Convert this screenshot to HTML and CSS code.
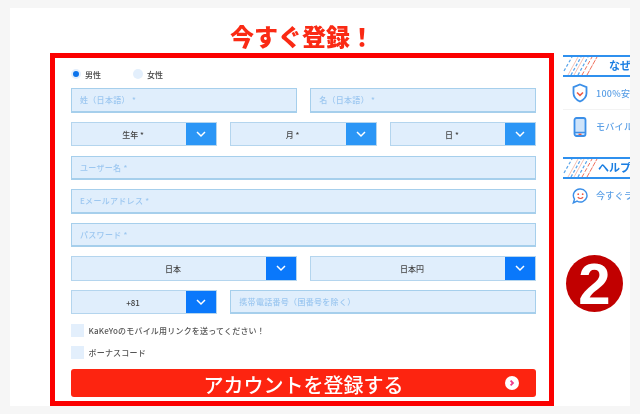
FILE: index.html
```html
<!DOCTYPE html>
<html lang="ja">
<head>
<meta charset="utf-8">
<title>今すぐ登録！</title>
<link rel="stylesheet" href="styles.css">
</head>
<body>
<div class="card">
  <main class="main">
    <h1 class="title">今すぐ登録！</h1>
    <form class="form">
      <div class="gender">
        <label class="radio-label"><span class="radio radio-on"></span>男性</label>
        <label class="radio-label"><span class="radio"></span>女性</label>
      </div>
      <div class="fields">
        <div class="row row-2">
          <div class="input">姓（日本語） *</div>
          <div class="input">名（日本語） *</div>
        </div>
        <div class="row row-3">
          <div class="select"><span class="select-text">生年 *</span><span class="chev chev-light"><svg viewBox="0 0 12 8" class="chev-svg"><path d="M2 2l4 4 4-4"/></svg></span></div>
          <div class="select"><span class="select-text">月 *</span><span class="chev chev-light"><svg viewBox="0 0 12 8" class="chev-svg"><path d="M2 2l4 4 4-4"/></svg></span></div>
          <div class="select"><span class="select-text">日 *</span><span class="chev chev-light"><svg viewBox="0 0 12 8" class="chev-svg"><path d="M2 2l4 4 4-4"/></svg></span></div>
        </div>
        <div class="input">ユーザー名 *</div>
        <div class="input">Eメールアドレス *</div>
        <div class="input">パスワード *</div>
        <div class="row row-2">
          <div class="select"><span class="select-text">日本</span><span class="chev"><svg viewBox="0 0 12 8" class="chev-svg"><path d="M2 2l4 4 4-4"/></svg></span></div>
          <div class="select"><span class="select-text">日本円</span><span class="chev"><svg viewBox="0 0 12 8" class="chev-svg"><path d="M2 2l4 4 4-4"/></svg></span></div>
        </div>
        <div class="row row-phone">
          <div class="select"><span class="select-text">+81</span><span class="chev"><svg viewBox="0 0 12 8" class="chev-svg"><path d="M2 2l4 4 4-4"/></svg></span></div>
          <div class="input">携帯電話番号（国番号を除く）</div>
        </div>
      </div>
      <div class="checks">
        <label class="check"><span class="box"></span>KaKeYoのモバイル用リンクを送ってください！</label>
        <label class="check"><span class="box"></span>ボーナスコード</label>
      </div>
      <div class="submit">
        <span class="submit-text">アカウントを登録する</span>
        <span class="submit-icon"><svg viewBox="0 0 14 14" class="submit-svg"><circle cx="7" cy="7" r="7" fill="#fff"/><path d="M5.6 4.6L8 7l-2.4 2.4" fill="none" stroke="#ee3b8a" stroke-width="1.8"/></svg></span>
      </div>
    </form>
  </main>
  <aside class="side">
    <div class="side-head">
      <svg class="stripes" viewBox="0 0 35 18" preserveAspectRatio="none"><g fill="none" stroke-width="1.2" stroke-dasharray="3 2"><path d="M1 14L9 0M8 18L18 0M15 18L25 0" stroke="#5aa5ea"/></g><g fill="none" stroke-width="1"><path d="M5 18L15 0M11 18L21 0" stroke="#f6c3b6"/><path d="M19 18L29 0" stroke="#f0705c" stroke-dasharray="4 2"/><path d="M24 18L34 0" stroke="#f0705c" stroke-dasharray="5 1"/></g></svg>
      <span class="side-title side-title-why">なぜKaKeYo</span>
    </div>
    <div class="side-row side-row-line">
      <svg class="side-icon" viewBox="0 0 16 20"><path d="M8 1.500l6.500 2.600v6.200c0 3.800-3 6.600-6.500 8.200-3.500-1.600-6.500-4.400-6.500-8.200V4.100z" fill="#fff" stroke="#3b8fe8" stroke-width="1.800"/><path d="M5 9.500l3 2.800 3-2.800" fill="none" stroke="#ee5a45" stroke-width="1.600"/></svg>
      <span class="side-text">100%安全</span>
    </div>
    <div class="side-row">
      <svg class="side-icon" viewBox="0 0 16 20"><rect x="2.500" y="1" width="11" height="18" rx="2" fill="#cfe4fa" stroke="#3b8fe8" stroke-width="1.800"/><path d="M2.500 15.500h11" stroke="#3b8fe8" stroke-width="1.500"/><path d="M6.500 17.300h3" stroke="#ee5a45" stroke-width="1.400"/></svg>
      <span class="side-text">モバイルアプリ</span>
    </div>
    <div class="side-head side-head-help">
      <svg class="stripes" viewBox="0 0 35 18" preserveAspectRatio="none"><g fill="none" stroke-width="1.2" stroke-dasharray="3 2"><path d="M1 14L9 0M8 18L18 0M15 18L25 0" stroke="#5aa5ea"/></g><g fill="none" stroke-width="1"><path d="M5 18L15 0M11 18L21 0" stroke="#f6c3b6"/><path d="M19 18L29 0" stroke="#f0705c" stroke-dasharray="4 2"/><path d="M24 18L34 0" stroke="#f0705c" stroke-dasharray="5 1"/></g></svg>
      <span class="side-title">ヘルプが必要</span>
    </div>
    <div class="side-row">
      <svg class="side-icon side-icon-chat" viewBox="0 0 18 18"><path d="M9.500 1.200a7.300 7.300 0 1 1-3.800 13.500L1.500 16.800l1.300-4.300A7.300 7.300 0 0 1 9.500 1.200z" fill="#fff" stroke="#3b8fe8" stroke-width="1.600"/><circle cx="7" cy="7" r="1" fill="#ee5a45"/><circle cx="12" cy="7" r="1" fill="#ee5a45"/><path d="M6.500 10.300c1.500 2 4.500 2 6 0" fill="none" stroke="#ee5a45" stroke-width="1.300"/></svg>
      <span class="side-text">今すぐライブチャット</span>
    </div>
    <div class="badge">2</div>
  </aside>
</div>
</body>
</html>
```
FILE: styles.css
```css
* { box-sizing: border-box; }
html, body { margin: 0; height: 414px; overflow: hidden; }
body {
  background: #f6f6f6;
  padding: 8px 10px;
  font-family: "Noto Sans CJK JP", "Noto Sans", sans-serif;
}
.card {
  width: 620px;
  height: 398px;
  background: #fff;
  display: flex;
  overflow: hidden;
  filter: blur(0.35px);
}
.main { margin-left: 40px; width: 504px; flex: none; }
.title {
  margin: 0;
  height: 45px;
  font-size: 24px;
  line-height: 55px;
  font-weight: 900;
  color: #fa2a14;
  text-align: center;
  overflow: hidden;
}
.form {
  height: 353px;
  border: 5px solid #fb0000;
  padding: 0 13px 0 16px;
}
.gender {
  display: flex;
  gap: 31px;
  height: 30.4px;
  padding-top: 10px;
  align-items: flex-start;
}
.radio-label {
  display: flex;
  align-items: center;
  gap: 4px;
  font-size: 8px;
  font-weight: 500;
  line-height: 13px;
  color: #444;
  width: 31px;
}
.radio {
  width: 10px;
  height: 10px;
  border-radius: 50%;
  background: #e3effc;
  flex: none;
  margin-top: -2px;
}
.radio-on {
  background: #0a73ec;
  border: 2px solid #e3effc;
}
.fields { display: flex; flex-direction: column; gap: 9.2px; }
.row { display: grid; gap: 13.3px; }
.row-2 { grid-template-columns: 1fr 1fr; }
.row-3 { grid-template-columns: 1fr 1fr 1fr; }
.row-phone { grid-template-columns: 146px 1fr; }
.input {
  height: 24.4px;
  background: #e0eefc;
  border: 1px solid #a6cfec;
  border-bottom-width: 2px;
  padding-left: 8px;
  font-size: 8px;
  font-weight: 500;
  line-height: 21px;
  color: #9cc7f0;
  letter-spacing: 0.3px;
}
.select {
  height: 24.4px;
  background: #e0eefc;
  border: 1px solid #b4d5ee;
  display: flex;
}
.select-text {
  flex: 1;
  padding-left: 8px;
  text-align: center;
  font-size: 8px;
  font-weight: 500;
  line-height: 23px;
  color: #444;
}
.chev {
  width: 30px;
  background: #0a78fb;
  display: flex;
  align-items: center;
  justify-content: center;
  flex: none;
}
.chev-light { background: #2b96f6; }
.chev-svg { width: 12px; height: 8px; }
.chev-svg path { fill: none; stroke: #fff; stroke-width: 1.5; }
.checks { display: flex; flex-direction: column; gap: 9.5px; margin-top: 9.8px; }
.check {
  display: flex;
  align-items: center;
  gap: 5px;
  height: 12.5px;
  font-size: 8px;
  font-weight: 500;
  color: #555;
  letter-spacing: 0.2px;
}
.box { width: 12.5px; height: 12.5px; background: #e3effc; flex: none; }
.submit {
  margin-top: 10.5px;
  height: 28px;
  background: #fd2410;
  border-radius: 3px;
  position: relative;
  text-align: center;
  color: #fff;
  font-size: 20px;
  font-weight: 500;
  line-height: 31px;
}
.submit-icon { position: absolute; right: 17px; top: 7px; line-height: 0; }
.submit-svg { width: 14px; height: 14px; }
.side {
  margin-left: 9px;
  margin-top: 47px;
  width: 67px;
  flex: none;
  overflow: hidden;
}
.side-head {
  height: 22px;
  border-top: 2px solid #2f90ee;
  border-bottom: 2px solid #2f90ee;
  position: relative;
  white-space: nowrap;
  overflow: hidden;
}
.side-head-help { margin-top: 14px; }
.stripes { position: absolute; left: 0; top: 0; width: 35px; height: 18px; }
.side-title {
  position: absolute;
  left: 35px;
  top: 0;
  font-size: 11px;
  line-height: 17px;
  font-weight: 700;
  color: #1a7ee2;
}
.side-title-why { left: 46px; }
.side-row {
  height: 33px;
  display: flex;
  align-items: center;
  gap: 8px;
  padding-left: 9px;
  white-space: nowrap;
  overflow: hidden;
}
.side-row-line { border-bottom: 1px solid #f3f3f3; }
.side-icon { width: 16px; height: 20px; flex: none; }
.side-text { font-size: 9px; font-weight: 500; color: #5a9fe6; letter-spacing: 0.3px; }
.badge {
  margin: 43px 0 0 3px;
  width: 57px;
  height: 57px;
  border-radius: 50%;
  background: #c10000;
  color: #fff;
  font-family: "Liberation Sans", sans-serif;
  font-weight: 700;
  font-size: 58px;
  line-height: 57px;
  text-align: center;
}
```
